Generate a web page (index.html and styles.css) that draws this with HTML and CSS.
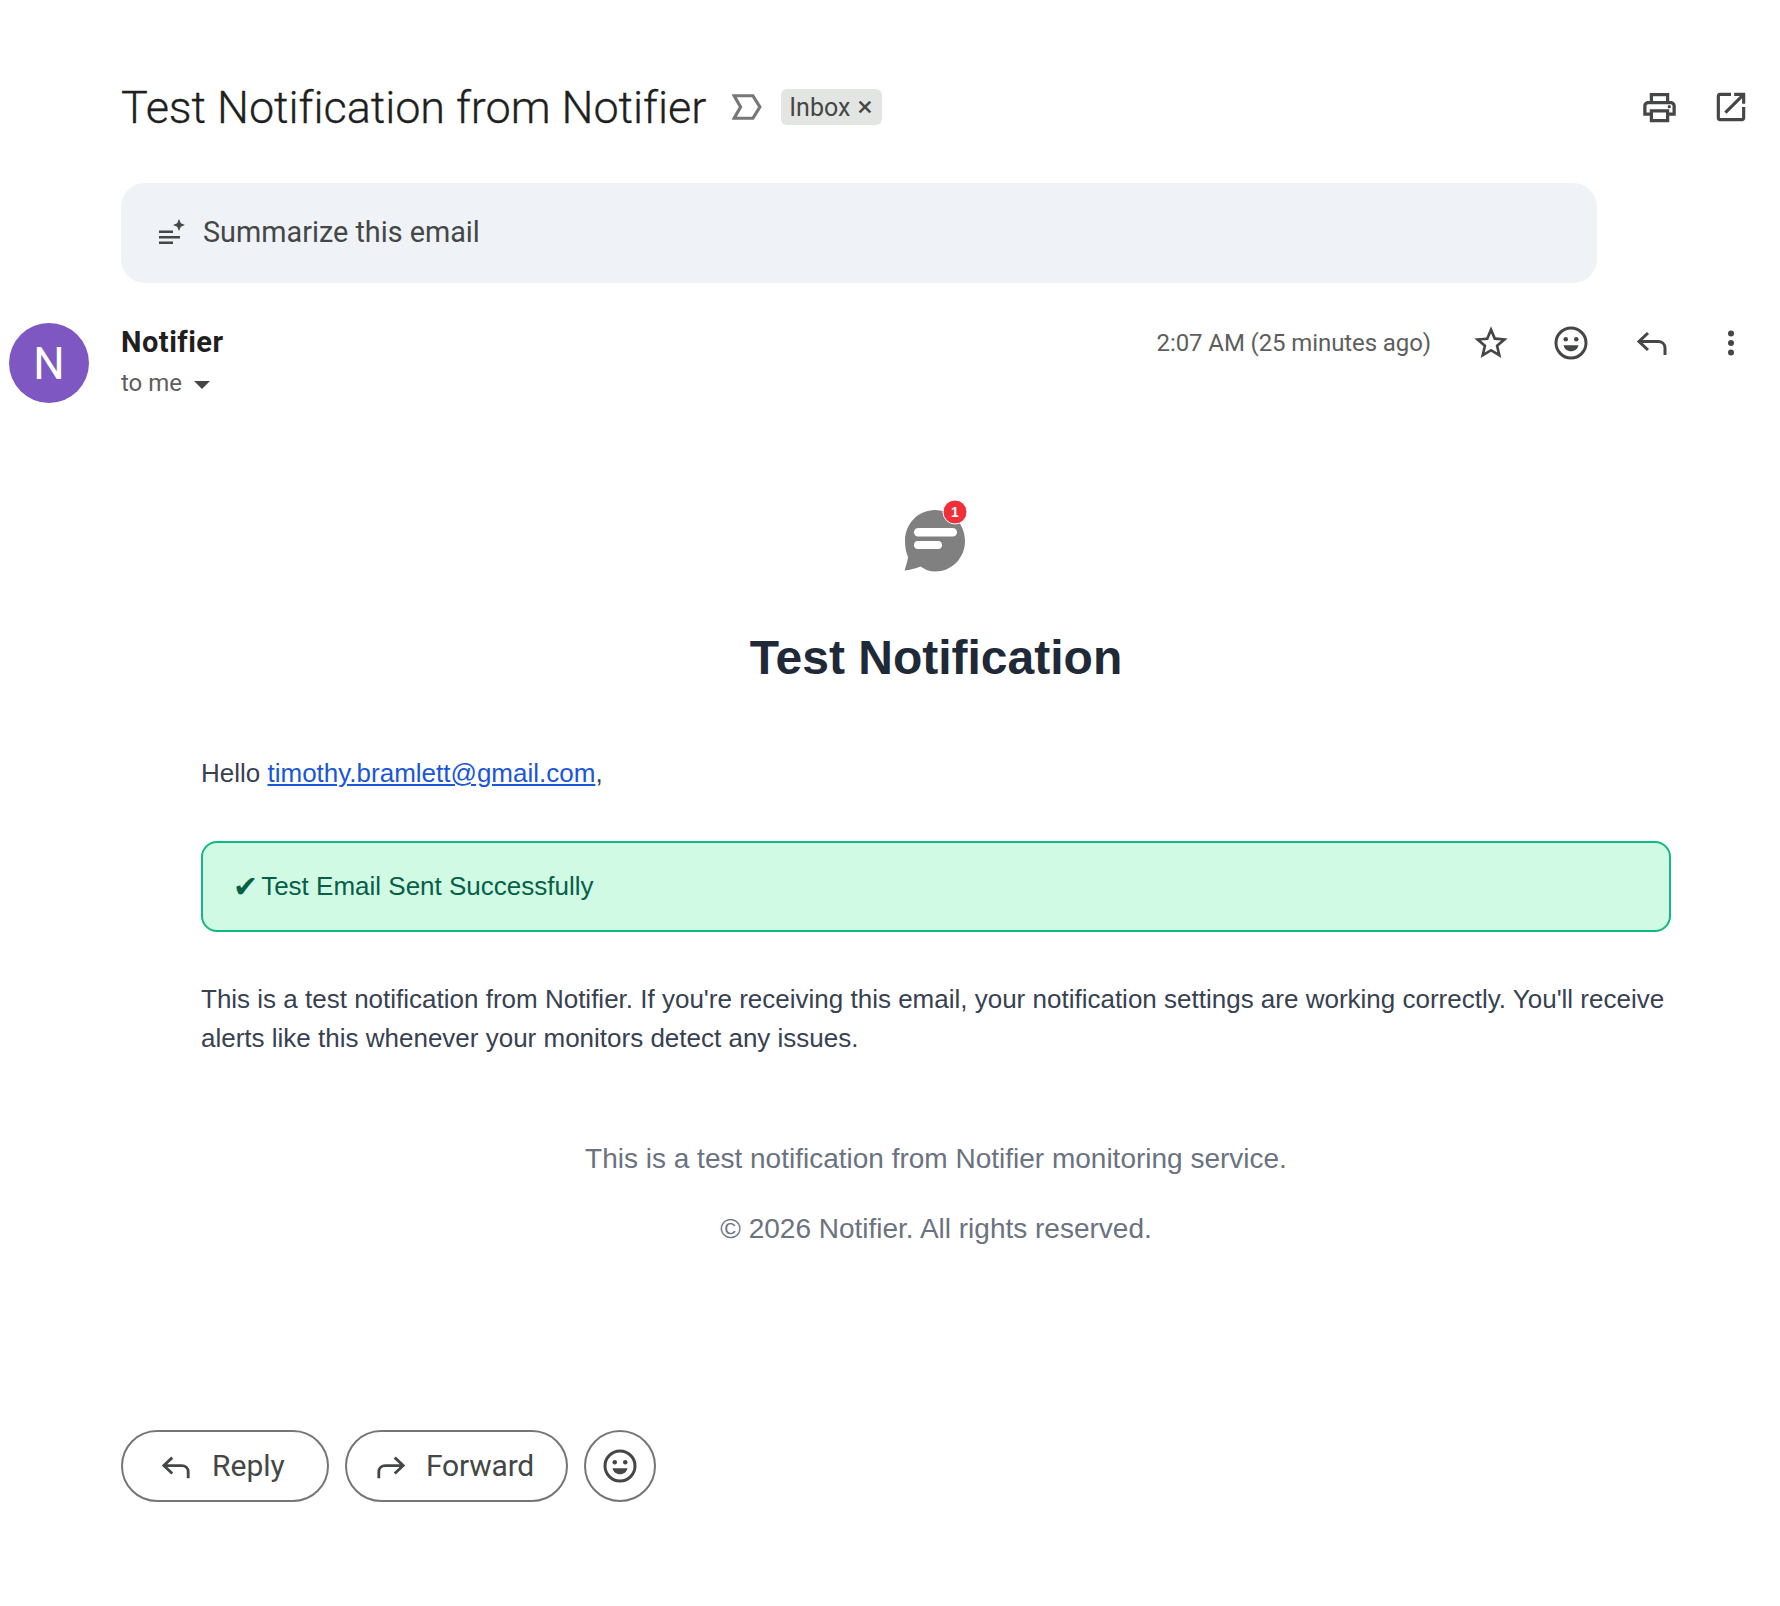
FILE: index.html
```html
<!DOCTYPE html>
<html>
<head>
    <title>Test Notification from Notifier</title>
    <link rel="stylesheet" href="styles.css">
</head>
<body>
    <div class="subject-row">
        <h1 class="subject">Test Notification from Notifier</h1>
        <svg class="label-icon" viewBox="0 0 28 24"><path d="M2 1.500H19.500L26 12L19.500 22.500H2L8 12Z" fill="none" stroke="#777" stroke-width="3"/></svg>
        <span class="chip">Inbox <span class="chip-x">×</span></span>
        <div class="subject-actions">
            <svg class="print-icon" viewBox="0 0 24 24"><path d="M19 8h-1V3H6v5H5c-1.66 0-3 1.34-3 3v6h4v4h12v-4h4v-6c0-1.66-1.34-3-3-3zM8 5h8v3H8V5zm8 12v2H8v-4h8v2zm2-2v-2H6v2H4v-4c0-.55.45-1 1-1h14c.55 0 1 .45 1 1v4h-2z"/><circle cx="18" cy="11.500" r="1"/></svg>
            <svg class="open-icon" viewBox="0 0 24 24"><path d="M19 19H5V5h7V3H5c-1.11 0-2 .9-2 2v14c0 1.100.89 2 2 2h14c1.100 0 2-.9 2-2v-7h-2v7zM14 3v2h3.590l-9.830 9.830 1.410 1.410L19 6.410V10h2V3h-7z"/></svg>
        </div>
    </div>

    <div class="summary">
        <svg class="summary-icon" viewBox="0 0 26 26"><path d="M0 11.500H14V14H0ZM0 17H21V19.500H0ZM0 22.500H14V25H0Z"/><path d="M20 0L21.800 4.200L26 6L21.800 7.800L20 12L18.200 7.800L14 6L18.200 4.200Z"/></svg>
        <span>Summarize this email</span>
    </div>

    <div class="message-head">
        <div class="avatar">N</div>
        <div class="sender">
            <div class="sender-name">Notifier</div>
            <div class="sender-to">to me <span class="caret"></span></div>
        </div>
        <div class="message-time">2:07 AM (25 minutes ago)</div>
        <svg class="star-icon" viewBox="0 0 24 24"><path d="M22 9.240l-7.190-.62L12 2 9.190 8.630 2 9.240l5.460 4.730L5.820 21 12 17.270 18.180 21l-1.630-7.030L22 9.240zM12 15.400l-3.760 2.270 1-4.280-3.320-2.880 4.380-.38L12 6.100l1.710 4.040 4.380.38-3.320 2.880 1 4.280L12 15.400z"/></svg>
        <svg class="smile-icon" viewBox="0 0 24 24"><circle cx="12" cy="12" r="10" fill="none" stroke="#444746" stroke-width="2"/><circle cx="8.500" cy="9.500" r="1.500"/><circle cx="15.500" cy="9.500" r="1.500"/><path d="M7 13.500H17C16.500 16 14.500 17.500 12 17.500S7.500 16 7 13.500Z"/></svg>
        <svg class="reply-icon" viewBox="0 0 32 26"><path d="M12 3L3 11.500L12 20M3 11.500H22C26 11.500 29 14 29 18V25" fill="none" stroke="#444746" stroke-width="3"/></svg>
        <svg class="more-icon" viewBox="0 0 8 26"><circle cx="4" cy="3.500" r="3"/><circle cx="4" cy="13" r="3"/><circle cx="4" cy="22.500" r="3"/></svg>
    </div>

    <div class="mail-body">
        <div class="logo">
            <svg viewBox="0 0 70 72" width="70" height="72">
                <path d="M3.500 70.500C5 66 6.500 61 7 57C5 52 4 47 4 41C4 24 17 10 34 10C51 10 64 24 64 41C64 58 51 71.500 34 71.500C28.500 71.500 24 69.500 19.500 66.500C14 68.500 9 70 3.500 70.500Z" fill="#808080"/>
                <rect x="13" y="28" width="43" height="8.500" rx="4.250" fill="#fff"/>
                <rect x="13" y="41" width="28" height="8" rx="4" fill="#fff"/>
                <circle cx="54" cy="12" r="12" fill="#ef3038" stroke="#fff" stroke-width="1"/>
                <text x="54" y="17" class="logo-count">1</text>
            </svg>
        </div>
        <h2 class="mail-title">Test Notification</h2>
        <p class="greeting">Hello <a href="#">timothy.bramlett@gmail.com</a>,</p>
        <div class="success-box"><span class="check">✔</span>Test Email Sent Successfully</div>
        <p class="mail-text">This is a test notification from Notifier. If you're receiving this email, your notification settings are working correctly. You'll receive alerts like this whenever your monitors detect any issues.</p>
        <div class="mail-footer">
            <p>This is a test notification from Notifier monitoring service.</p>
            <p>© 2026 Notifier. All rights reserved.</p>
        </div>
    </div>

    <div class="reply-row">
        <button class="pill-btn reply-btn">
            <svg viewBox="0 0 32 26"><path d="M12 3L3 11.500L12 20M3 11.500H22C26 11.500 29 14 29 18V25" fill="none" stroke="#444746" stroke-width="3"/></svg>
            Reply
        </button>
        <button class="pill-btn forward-btn">
            <svg viewBox="0 0 32 26"><path d="M20 3L29 11.500L20 20M29 11.500H10C6 11.500 3 14 3 18V25" fill="none" stroke="#444746" stroke-width="3"/></svg>
            Forward
        </button>
        <button class="round-btn">
            <svg viewBox="0 0 24 24"><circle cx="12" cy="12" r="10" fill="none" stroke="#444746" stroke-width="2"/><circle cx="8.500" cy="9.500" r="1.500"/><circle cx="15.500" cy="9.500" r="1.500"/><path d="M7 13.500H17C16.500 16 14.500 17.500 12 17.500S7.500 16 7 13.500Z"/></svg>
        </button>
    </div>
</body>
</html>
```

FILE: styles.css
```css
body {
    margin: 0;
    background-color: white;
    font-family: "Roboto", sans-serif;
    color: #444746;
    height: 1606px;
    overflow: hidden;
}

svg {
    fill: #444746;
    display: block;
}

/* subject line */
.subject-row {
    display: flex;
    align-items: center;
    height: 70px;
    margin-top: 72px;
    padding-left: 121px;
}

.subject {
    margin: 0;
    font-size: 45px;
    font-weight: 300;
    letter-spacing: -0.05px;
    color: #1f1f1f;
    -webkit-text-stroke: 0.3px #1f1f1f;
}

.label-icon {
    width: 30px;
    height: 26px;
    margin-left: 26px;
}

.chip {
    margin-left: 19px;
    width: 101px;
    height: 36px;
    line-height: 36px;
    box-sizing: border-box;
    padding-left: 8px;
    background-color: #e3e5e3;
    border-radius: 6px;
    font-size: 25px;
    white-space: nowrap;
}

.chip-x {
    margin-left: 1px;
    font-size: 28px;
}

.subject-actions {
    display: flex;
    align-items: center;
    margin-left: auto;
    margin-right: 30px;
    gap: 33px;
}

.print-icon {
    width: 39px;
    height: 39px;
}

.open-icon {
    width: 38px;
    height: 38px;
}

/* summarize */
.summary {
    display: flex;
    align-items: center;
    margin: 41px 0 0 121px;
    width: 1476px;
    height: 100px;
    box-sizing: border-box;
    padding: 0 0 2px 38px;
    background-color: #eff3f8;
    border-radius: 24px;
    font-size: 28.800px;
}

.summary-icon {
    width: 26px;
    height: 26px;
    margin-right: 18px;
}

/* sender */
.message-head {
    display: flex;
    align-items: flex-start;
    margin-top: 40px;
    padding-left: 9px;
}

.avatar {
    width: 80px;
    height: 80px;
    margin-right: 32px;
    border-radius: 50%;
    background-color: #7e57c2;
    color: white;
    font-size: 44px;
    line-height: 82px;
    text-align: center;
}

.sender {
    flex: 1;
    margin-top: -1px;
}

.sender-name {
    font-size: 29px;
    font-weight: 700;
    letter-spacing: 0.5px;
    line-height: 40px;
    color: #1f1f1f;
}

.sender-to {
    margin-top: 1px;
    font-size: 24px;
    line-height: 40px;
    color: #5e5e5e;
}

.caret {
    display: inline-block;
    margin-left: 6px;
    vertical-align: middle;
    border-top: 8px solid #444746;
    border-left: 8px solid transparent;
    border-right: 8px solid transparent;
}

.message-time {
    margin-right: 40px;
    font-size: 24px;
    letter-spacing: -0.1px;
    line-height: 40px;
    color: #5e5e5e;
}

.star-icon {
    width: 40px;
    height: 40px;
    margin-right: 42px;
}

.smile-icon {
    width: 36px;
    height: 36px;
    margin: 2px 47px 0 0;
}

.reply-icon {
    width: 32px;
    height: 26px;
    margin: 7px 59px 0 0;
}

.more-icon {
    width: 8px;
    height: 26px;
    margin: 7px 45px 0 0;
}

/* mail content */
.mail-body {
    margin-left: 121px;
    width: 1470px;
    padding: 0 80px;
    color: #374151;
    font-family: "Liberation Sans", sans-serif;
}

.logo {
    display: flex;
    justify-content: center;
    margin-top: 97px;
}

.mail-title {
    margin: 56px 0 0;
    font-size: 48px;
    line-height: 60px;
    text-align: center;
    color: #1f2937;
}

.greeting {
    margin: 65px 0 0;
    font-size: 26px;
    line-height: 40px;
}

.greeting a {
    color: #1a56db;
}

.success-box {
    display: flex;
    align-items: center;
    margin-top: 48px;
    height: 91px;
    box-sizing: border-box;
    padding-left: 30px;
    border: 2px solid #10b981;
    border-radius: 16px;
    background-color: #d1fae5;
    color: #065f46;
    font-size: 26px;
}

.check {
    margin-right: 3px;
    font-family: "DejaVu Sans", sans-serif;
    font-size: 30px;
}

.mail-text {
    margin: 48px 0 0;
    font-size: 26px;
    line-height: 39px;
}

.mail-footer {
    margin-top: 81px;
    font-size: 28px;
    line-height: 40px;
    text-align: center;
    color: #6b7280;
}

.mail-footer p {
    margin: 0 0 30px;
}

/* reply buttons */
.reply-row {
    display: flex;
    position: absolute;
    top: 1430px;
    left: 121px;
    gap: 16px;
}

.pill-btn {
    display: flex;
    align-items: center;
    height: 72px;
    box-sizing: border-box;
    padding-bottom: 2px;
    border: 2px solid #747775;
    border-radius: 36px;
    background: none;
    font-family: "Roboto", sans-serif;
    font-size: 30px;
    color: #444746;
}

.pill-btn svg {
    width: 30px;
    height: 26px;
    margin: 2px 20px 0 0;
}

.reply-btn {
    width: 208px;
    padding-left: 38px;
}

.reply-btn svg {
    margin-right: 21px;
}

.forward-btn {
    width: 223px;
    padding-left: 29px;
    letter-spacing: -0.2px;
}

.round-btn {
    width: 72px;
    height: 72px;
    padding: 0;
    display: flex;
    align-items: center;
    justify-content: center;
    border: 2px solid #747775;
    border-radius: 50%;
    background: none;
}

.round-btn svg {
    width: 36px;
    height: 36px;
}

.logo-count {
    font-family: "Liberation Sans", sans-serif;
    font-size: 14px;
    font-weight: 700;
    fill: white;
    text-anchor: middle;
}
```
